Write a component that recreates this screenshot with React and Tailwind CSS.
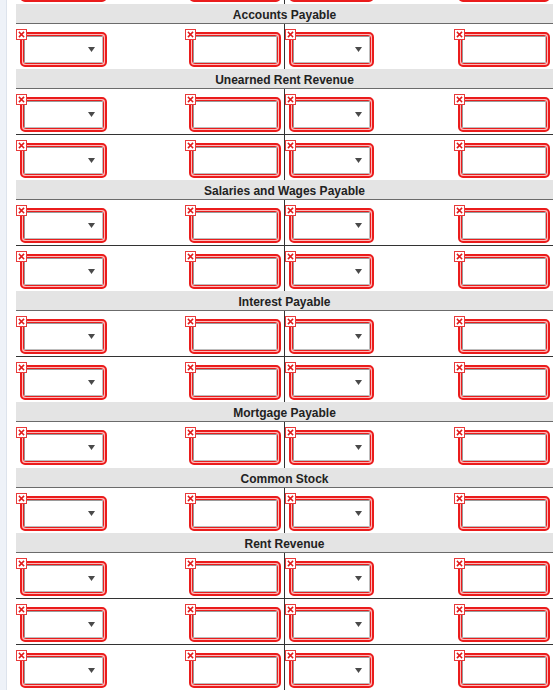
import React from 'react';

const GROUPS = [
    { title: 'Accounts Payable', rows: 1 },
    { title: 'Unearned Rent Revenue', rows: 2 },
    { title: 'Salaries and Wages Payable', rows: 2 },
    { title: 'Interest Payable', rows: 2 },
    { title: 'Mortgage Payable', rows: 1, tall: true },
    { title: 'Common Stock', rows: 1 },
    { title: 'Rent Revenue', rows: 3 },
];

// small red "x" badge sitting on the field's corner
const ErrorBadge = () => (
    <span className="absolute -left-[4px] -top-[3px] w-[11px] h-[11px] border border-[#e83a3a] bg-white flex items-center justify-center z-10">
        <svg width="7" height="7" viewBox="0 0 7 7">
            <path d="M1.5 1.5 L5.5 5.5 M5.5 1.5 L1.5 5.5" stroke="#e21b1b" strokeWidth="1.6" strokeLinecap="square" />
        </svg>
    </span>
);

const Field = ({ width, select }) => (
    <div className="relative" style={{ width }}>
        <ErrorBadge />
        <div className="h-[35px] rounded-[5px] border-2 border-[#ea1c1c] bg-[#ffb8b8] p-px">
            <div className="h-full rounded-[3px] border border-[#ea1c1c]">
                <div className="h-full border border-[#bdbdbd] border-t-[#9a9a9a] border-l-[#9a9a9a] bg-white flex items-center justify-end pr-[7px]">
                    {select && (
                        <svg width="7" height="5" viewBox="0 0 7 5">
                            <path d="M0 0 H7 L3.5 5 Z" fill="#4a4a4a" />
                        </svg>
                    )}
                </div>
            </div>
        </div>
    </div>
);

const Row = ({ divider, tall }) => (
    <div className={`flex box-content ${tall ? 'h-[46px]' : 'h-[45px]'} ${divider ? 'border-b border-[#333]' : ''}`}>
        <div className="w-[268px] flex justify-between items-start pt-[8px] pl-[4px] pr-[3px]">
            <Field width={87} select />
            <Field width={92} />
        </div>
        <div className="w-px bg-[#333]" />
        <div className="w-[268px] flex justify-between items-start pt-[8px] pl-[4px] pr-[3px]">
            <Field width={85} select />
            <Field width={92} />
        </div>
    </div>
);

const Header = ({ title }) => (
    <div className="h-[20px] bg-[#e4e4e4] border-b border-[#6b6b6b] pt-[3px] text-center text-[12px] leading-[16px] font-bold text-[#222] font-['Liberation_Sans',Arial,sans-serif]">
        {title}
    </div>
);

export default function App() {
    return (
        <div className="w-[560px] h-[690px] overflow-hidden bg-white flex">
            <div className="w-[7px] shrink-0 bg-[#eef2f8] border-r border-[#dde3ec]" />
            <div className="ml-[9px] w-[537px] shrink-0 -mt-[41px]">
                <Row />
                {GROUPS.map((g) => (
                    <div key={g.title}>
                        <Header title={g.title} />
                        {Array.from({ length: g.rows }).map((_, i) => (
                            <Row key={i} divider={i < g.rows - 1} tall={g.tall} />
                        ))}
                    </div>
                ))}
            </div>
        </div>
    );
}
